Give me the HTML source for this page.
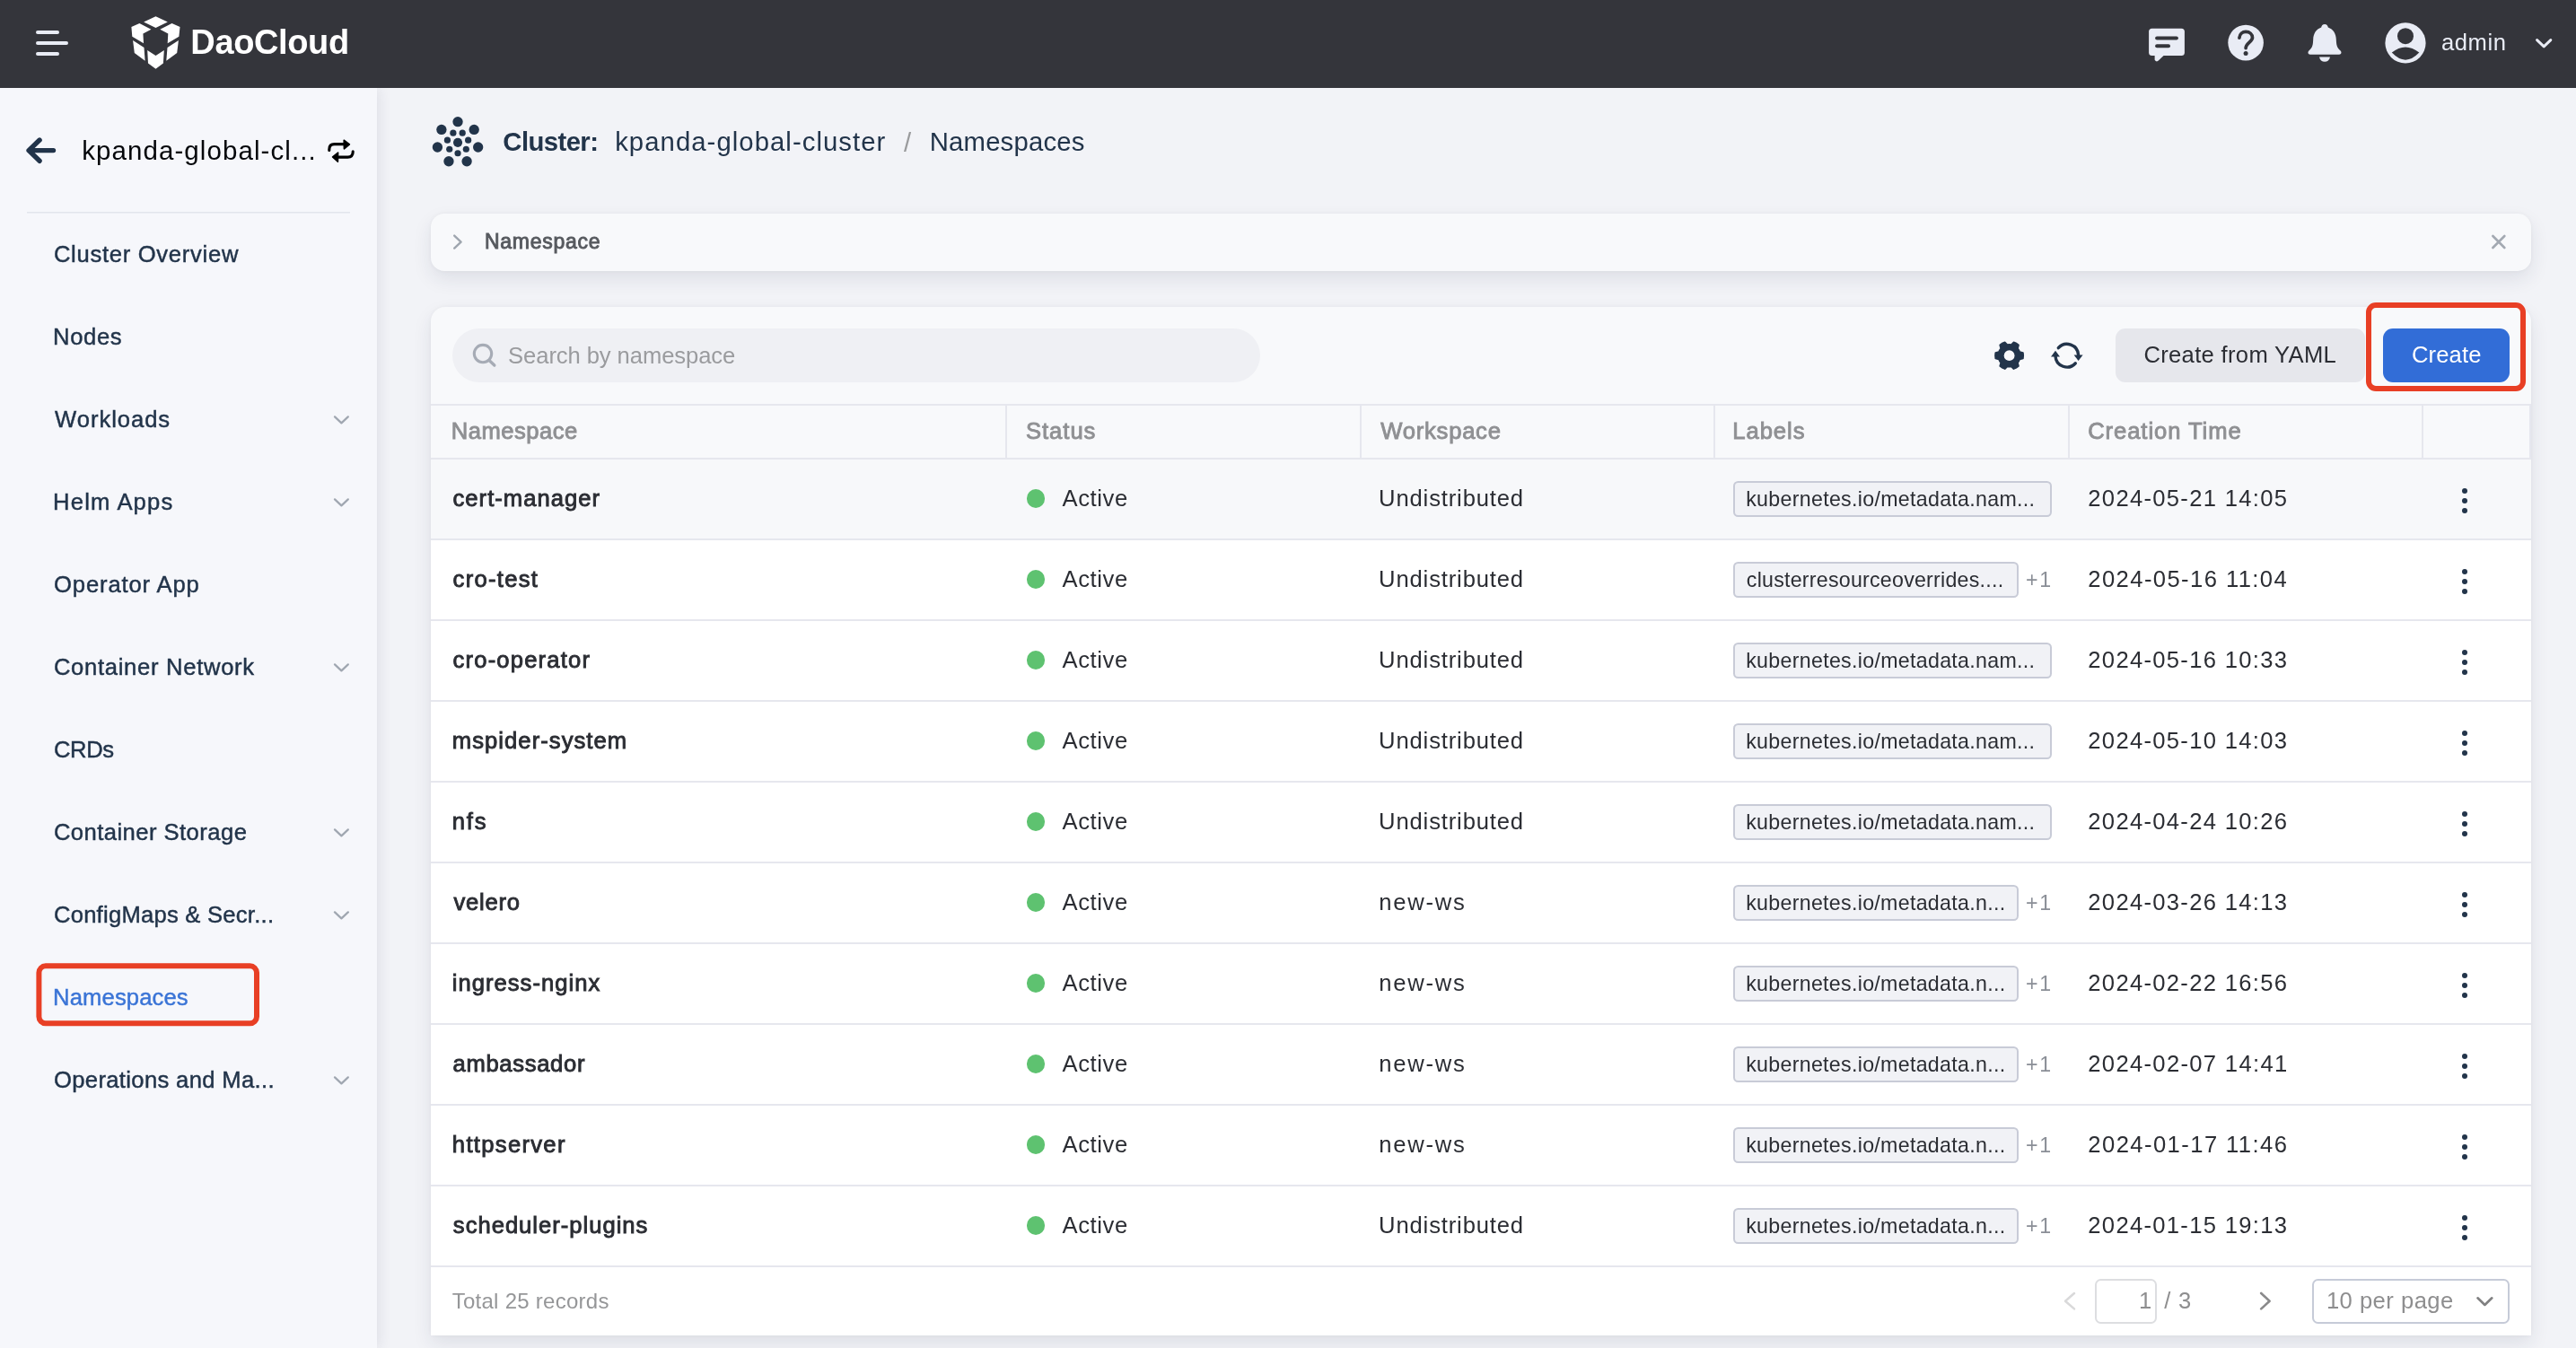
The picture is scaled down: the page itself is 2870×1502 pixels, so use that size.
<!DOCTYPE html>
<html lang="en">
<head>
<meta charset="utf-8">
<title>Namespaces - DaoCloud</title>
<style>
*{box-sizing:border-box;margin:0;padding:0}
html,body{width:2870px;height:1502px;overflow:hidden;background:#f2f3f7;font-family:"Liberation Sans",sans-serif}
.abs,.t,.tag,.dot,.kd{position:absolute}
.t{white-space:nowrap;line-height:1}
#hdr{position:absolute;left:0;top:0;width:2870px;height:97.5px;background:#34353b}
#side{position:absolute;left:0;top:97.5px;width:420px;height:1405px;background:#f6f7fb;box-shadow:3px 0 14px rgba(30,40,70,.085)}
.card{position:absolute;background:#f8f9fb;box-shadow:0 9px 21px rgba(30,40,70,.095),0 0 6px rgba(30,40,70,.05)}
.tag{height:39.7px;border:2px solid #c8cbd7;background:#f1f2f6;border-radius:5.5px}
.dot{width:20.5px;height:20.5px;border-radius:50%;background:#5ec270}
.kd{width:6px;height:6px;border-radius:50%;background:#22344a}
.hl{position:absolute;height:2px;background:#e6e7ee}
.vl{position:absolute;width:2px;background:#e6e7ee}
svg{position:absolute;overflow:visible}
#root{position:absolute;left:0;top:0;width:2870px;height:1502px;will-change:transform}
</style>
</head>
<body>
<div id="root">
<div id="side"></div>
<div id="hdr"></div>

<!-- header icons -->
<svg style="left:0;top:0" width="2870" height="98" viewBox="0 0 2870 98">
  <g stroke="#e9ecf5" stroke-width="4" stroke-linecap="round">
    <line x1="42" y1="36" x2="64" y2="36"/><line x1="42" y1="48" x2="74" y2="48"/><line x1="42" y1="60" x2="64" y2="60"/>
  </g>
  <g fill="#ffffff">
    <polygon points="173.5,18.2 186.8,24.5 173.5,31.1 160.1,24.5"/>
    <polygon points="146.4,30.0 155.4,26.1 168.4,32.8 159.4,37.6 160.0,48.3 147.3,40.7"/>
    <polygon points="200.5,30.0 191.5,26.1 178.3,32.8 187.3,37.6 186.7,48.3 199.4,40.7"/>
    <polygon points="148.1,44.9 160.5,53.1 161.6,67.8 149.8,59.0"/>
    <polygon points="198.9,44.9 186.5,53.1 185.3,67.8 197.2,59.0"/>
    <polygon points="164.2,55.9 173.5,61.9 182.8,55.9 181.9,70.6 173.5,76.8 165.0,70.6"/>
  </g>
  <!-- chat -->
  <g fill="#e9ecf5">
    <rect x="2394.1" y="31.8" width="39.8" height="30.3" rx="3.5"/>
    <path d="M2400.6 60 L2400.6 66.8 Q2402.6 69.6 2404.8 67.6 L2411.6 61 Z"/>
  </g>
  <g stroke="#34353b" stroke-width="4" stroke-linecap="round">
    <line x1="2403.1" y1="42.6" x2="2424.9" y2="42.6"/><line x1="2403.1" y1="51.3" x2="2416" y2="51.3"/>
  </g>
  <!-- help -->
  <circle cx="2502.1" cy="47.6" r="19.8" fill="#e9ecf5"/>
  <path d="M2494.9 42.2 C2495.3 37.6 2498.5 35.4 2502.1 35.4 C2506.5 35.4 2509.5 38.2 2509.5 42 C2509.5 46.4 2502.1 48 2502.1 53.6" fill="none" stroke="#34353b" stroke-width="3.7" stroke-linecap="round"/>
  <circle cx="2502.1" cy="59.6" r="2.5" fill="#34353b"/>
  <!-- bell -->
  <g fill="#e9ecf5">
    <path d="M2590 27 C2592.2 27 2593.6 28.6 2593.8 30.6 C2599.6 32.6 2602.6 37.6 2602.8 44 C2603 50 2603.6 53.2 2607.6 56.6 C2609.2 58.2 2608.6 60.8 2606.2 60.8 L2573.8 60.8 C2571.4 60.8 2570.8 58.2 2572.4 56.6 C2576.4 53.2 2577 50 2577.2 44 C2577.4 37.6 2580.4 32.6 2586.2 30.6 C2586.4 28.6 2587.8 27 2590 27 Z"/>
    <path d="M2584 63.5 L2596 63.5 C2595.4 66.8 2593 68.8 2590 68.8 C2587 68.8 2584.6 66.8 2584 63.5 Z"/>
  </g>
  <!-- avatar -->
  <circle cx="2680" cy="47.9" r="22.6" fill="#e9ecf5"/>
  <circle cx="2680" cy="40.2" r="9" fill="#34353b"/>
  <path d="M2664.8 58.6 Q2680 46.2 2695.3 58.6 Q2680 74.8 2664.8 58.6 Z" fill="#34353b"/>
  <polyline points="2826.6,44.6 2834.2,51.8 2841.8,44.6" fill="none" stroke="#e9ecf5" stroke-width="3" stroke-linecap="round" stroke-linejoin="round"/>
</svg>

<!-- sidebar shapes -->
<svg style="left:0;top:0" width="440" height="1502" viewBox="0 0 440 1502">
  <path d="M59.5 167.6 L32.05 167.6 M44.1 156 L32.05 167.6 L44.1 179.3" fill="none" stroke="#22344a" stroke-width="5.4" stroke-linecap="round" stroke-linejoin="round"/>
  <g fill="none" stroke="#000" stroke-width="3.1" stroke-linecap="round">
    <path d="M366.8 167.4 L366.8 166.4 Q366.8 160.6 372.6 160.6 L383 160.6"/>
    <path d="M393.2 168.7 L393.2 169.3 Q393.2 175.1 387.4 175.1 L377 175.1"/>
  </g>
  <g fill="#000" stroke="#000" stroke-width="1.6" stroke-linejoin="round">
    <polygon points="383.2,156.2 389.4,160.8 383.4,165.8"/>
    <polygon points="376.6,170.1 370.6,174.9 376.4,180.1"/>
  </g>
  <rect x="30" y="236" width="360" height="1.5" fill="#e2e5ec"/>
  <g fill="none" stroke="#a0a7b1" stroke-width="2.3" stroke-linecap="round" stroke-linejoin="round">
    <polyline points="373,464.40 380.4,471.30 387.8,464.40"/>
    <polyline points="373,556.40 380.4,563.30 387.8,556.40"/>
    <polyline points="373,740.40 380.4,747.30 387.8,740.40"/>
    <polyline points="373,924.40 380.4,931.30 387.8,924.40"/>
    <polyline points="373,1016.40 380.4,1023.30 387.8,1016.40"/>
    <polyline points="373,1200.40 380.4,1207.30 387.8,1200.40"/>
  </g>
  <rect x="43.4" y="1076.3" width="242.6" height="64" rx="7.5" fill="none" stroke="#e83f25" stroke-width="6"/>
</svg>

<!-- cluster icon -->
<svg style="left:482px;top:130px" width="56" height="56" viewBox="-28 -28 56 56" id="clu"><circle cx="0.04" cy="0.85" r="5.05" fill="#22344a"/><circle cx="0.04" cy="-22.35" r="5.65" fill="#22344a"/><circle cx="5.20" cy="-9.87" r="3.6" fill="#22344a"/><circle cx="18.18" cy="-13.61" r="5.65" fill="#22344a"/><circle cx="11.64" cy="-1.80" r="3.6" fill="#22344a"/><circle cx="22.66" cy="6.01" r="5.65" fill="#22344a"/><circle cx="9.34" cy="8.27" r="3.6" fill="#22344a"/><circle cx="10.11" cy="21.75" r="5.65" fill="#22344a"/><circle cx="0.04" cy="12.75" r="3.6" fill="#22344a"/><circle cx="-10.03" cy="21.75" r="5.65" fill="#22344a"/><circle cx="-9.26" cy="8.27" r="3.6" fill="#22344a"/><circle cx="-22.58" cy="6.01" r="5.65" fill="#22344a"/><circle cx="-11.56" cy="-1.80" r="3.6" fill="#22344a"/><circle cx="-18.10" cy="-13.61" r="5.65" fill="#22344a"/><circle cx="-5.12" cy="-9.87" r="3.6" fill="#22344a"/></svg>

<!-- cards -->
<div class="card" style="left:480px;top:238px;width:2340px;height:64px;border-radius:15px"></div>
<div class="card" style="left:480px;top:342px;width:2340px;height:1146px;border-radius:16px 16px 0 0;overflow:hidden">
  <div class="abs" style="left:0;top:169px;width:2340px;height:90px;background:#f7f8fa"></div>
  <div class="abs" style="left:0;top:259px;width:2340px;height:887px;background:#fff"></div>
</div>
<svg style="left:0;top:0" width="2870" height="1502" viewBox="0 0 2870 1502">
  <polyline points="506.2,262.6 513.6,269.6 506.2,276.6" fill="none" stroke="#9fa6af" stroke-width="2.4" stroke-linecap="round" stroke-linejoin="round"/>
  <path d="M2777.4 263 L2790.3 276 M2790.3 263 L2777.4 276" stroke="#a3a9b2" stroke-width="2.6" stroke-linecap="round"/>
</svg>

<!-- toolbar -->
<div class="abs" style="left:504px;top:366px;width:900px;height:59.5px;border-radius:30px;background:#eff0f4"></div>
<svg style="left:0;top:0" width="2870" height="1502" viewBox="0 0 2870 1502">
  <circle cx="538" cy="394.1" r="9.7" fill="none" stroke="#a6abb5" stroke-width="3.1"/>
  <line x1="545" y1="401.6" x2="550.8" y2="407" stroke="#a6abb5" stroke-width="3.4" stroke-linecap="round"/>
  <g><path d="M2250.19 392.09 L2253.89 393.09 A15.60 15.60 0 0 1 2253.89 399.31 L2250.19 400.31 A12.30 12.30 0 0 1 2247.95 404.19 L2248.94 407.88 A15.60 15.60 0 0 1 2243.55 410.99 L2240.84 408.29 A12.30 12.30 0 0 1 2236.36 408.29 L2233.65 410.99 A15.60 15.60 0 0 1 2228.26 407.88 L2229.25 404.19 A12.30 12.30 0 0 1 2227.01 400.31 L2223.31 399.31 A15.60 15.60 0 0 1 2223.31 393.09 L2227.01 392.09 A12.30 12.30 0 0 1 2229.25 388.21 L2228.26 384.52 A15.60 15.60 0 0 1 2233.65 381.41 L2236.36 384.11 A12.30 12.30 0 0 1 2240.84 384.11 L2243.55 381.41 A15.60 15.60 0 0 1 2248.94 384.52 L2247.95 388.21 A12.30 12.30 0 0 1 2250.19 392.09Z" fill="#22344a" stroke="#22344a" stroke-width="1.8" stroke-linejoin="round"/><circle cx="2238.6" cy="396.2" r="5.9" fill="#f8f9fb"/></g>
  <g><path d="M2293.29 387.64 A12.8 12.8 0 0 1 2315.58 395.53" fill="none" stroke="#22344a" stroke-width="3.4" stroke-linecap="round"/><path d="M2312.31 404.76 A12.8 12.8 0 0 1 2290.02 396.87" fill="none" stroke="#22344a" stroke-width="3.4" stroke-linecap="round"/><polygon points="2310.60,395.40 2320.60,395.40 2315.60,401.90" fill="#22344a"/><polygon points="2285.00,397.60 2295.00,397.60 2290.00,390.80" fill="#22344a"/></g>
</svg>
<div class="abs" style="left:2357px;top:366px;width:278px;height:59.6px;border-radius:11px;background:#e6e7ec"></div>
<div class="abs" style="left:2655px;top:366px;width:141px;height:59.6px;border-radius:11px;background:#326dd7"></div>
<div class="abs" style="left:2636px;top:337px;width:178px;height:99px;border-radius:11px;border:6px solid #e83f25"></div>

<!-- table lines -->
<div class="hl" style="left:480px;top:450px;width:2340px"></div>
<div class="hl" style="left:480px;top:510px;width:2340px"></div>
<div class="hl" style="left:480px;top:600px;width:2340px"></div>
<div class="hl" style="left:480px;top:690px;width:2340px"></div>
<div class="hl" style="left:480px;top:780px;width:2340px"></div>
<div class="hl" style="left:480px;top:870px;width:2340px"></div>
<div class="hl" style="left:480px;top:960px;width:2340px"></div>
<div class="hl" style="left:480px;top:1050px;width:2340px"></div>
<div class="hl" style="left:480px;top:1140px;width:2340px"></div>
<div class="hl" style="left:480px;top:1230px;width:2340px"></div>
<div class="hl" style="left:480px;top:1320px;width:2340px"></div>
<div class="hl" style="left:480px;top:1410px;width:2340px"></div>
<div class="vl" style="left:1120px;top:452px;height:58px"></div>
<div class="vl" style="left:1514.5px;top:452px;height:58px"></div>
<div class="vl" style="left:1909px;top:452px;height:58px"></div>
<div class="vl" style="left:2303.5px;top:452px;height:58px"></div>
<div class="vl" style="left:2698px;top:452px;height:58px"></div>
<div class="vl" style="left:2818px;top:452px;height:58px"></div>

<div class="tag" style="left:1931.2px;top:535.9px;width:354.4999999999998px"></div>
<div class="dot" style="left:1143.75px;top:545px"></div>
<div class="kd" style="left:2743px;top:543.9px"></div>
<div class="kd" style="left:2743px;top:555px"></div>
<div class="kd" style="left:2743px;top:566.1px"></div>
<div class="tag" style="left:1931.2px;top:625.9px;width:317.4999999999998px"></div>
<div class="dot" style="left:1143.75px;top:635px"></div>
<div class="kd" style="left:2743px;top:633.9px"></div>
<div class="kd" style="left:2743px;top:645px"></div>
<div class="kd" style="left:2743px;top:656.1px"></div>
<div class="tag" style="left:1931.2px;top:715.9px;width:354.4999999999998px"></div>
<div class="dot" style="left:1143.75px;top:725px"></div>
<div class="kd" style="left:2743px;top:723.9px"></div>
<div class="kd" style="left:2743px;top:735px"></div>
<div class="kd" style="left:2743px;top:746.1px"></div>
<div class="tag" style="left:1931.2px;top:805.9px;width:354.4999999999998px"></div>
<div class="dot" style="left:1143.75px;top:815px"></div>
<div class="kd" style="left:2743px;top:813.9px"></div>
<div class="kd" style="left:2743px;top:825px"></div>
<div class="kd" style="left:2743px;top:836.1px"></div>
<div class="tag" style="left:1931.2px;top:895.9px;width:354.4999999999998px"></div>
<div class="dot" style="left:1143.75px;top:905px"></div>
<div class="kd" style="left:2743px;top:903.9px"></div>
<div class="kd" style="left:2743px;top:915px"></div>
<div class="kd" style="left:2743px;top:926.1px"></div>
<div class="tag" style="left:1931.2px;top:985.9px;width:317.4999999999998px"></div>
<div class="dot" style="left:1143.75px;top:995px"></div>
<div class="kd" style="left:2743px;top:993.9px"></div>
<div class="kd" style="left:2743px;top:1005px"></div>
<div class="kd" style="left:2743px;top:1016.1px"></div>
<div class="tag" style="left:1931.2px;top:1075.9px;width:317.4999999999998px"></div>
<div class="dot" style="left:1143.75px;top:1085px"></div>
<div class="kd" style="left:2743px;top:1083.9px"></div>
<div class="kd" style="left:2743px;top:1095px"></div>
<div class="kd" style="left:2743px;top:1106.1px"></div>
<div class="tag" style="left:1931.2px;top:1165.9px;width:317.4999999999998px"></div>
<div class="dot" style="left:1143.75px;top:1175px"></div>
<div class="kd" style="left:2743px;top:1173.9px"></div>
<div class="kd" style="left:2743px;top:1185px"></div>
<div class="kd" style="left:2743px;top:1196.1px"></div>
<div class="tag" style="left:1931.2px;top:1255.9px;width:317.4999999999998px"></div>
<div class="dot" style="left:1143.75px;top:1265px"></div>
<div class="kd" style="left:2743px;top:1263.9px"></div>
<div class="kd" style="left:2743px;top:1275px"></div>
<div class="kd" style="left:2743px;top:1286.1px"></div>
<div class="tag" style="left:1931.2px;top:1345.9px;width:317.4999999999998px"></div>
<div class="dot" style="left:1143.75px;top:1355px"></div>
<div class="kd" style="left:2743px;top:1353.9px"></div>
<div class="kd" style="left:2743px;top:1365px"></div>
<div class="kd" style="left:2743px;top:1376.1px"></div>

<!-- pagination -->
<div class="abs" style="left:2334.4px;top:1424.5px;width:69px;height:50.6px;border:2px solid #dddee1;border-radius:6.5px;background:#fff"></div>
<div class="abs" style="left:2576.3px;top:1424.5px;width:219.3px;height:50.6px;border:2px solid #c6cbd8;border-radius:6.5px;background:#fff"></div>
<svg style="left:0;top:0" width="2870" height="1502" viewBox="0 0 2870 1502">
  <polyline points="2311,1441 2301,1449.7 2311,1458.4" fill="none" stroke="#d9d9da" stroke-width="2.5" stroke-linecap="round" stroke-linejoin="round"/>
  <polyline points="2519.2,1441 2528.6,1449.7 2519.2,1458.4" fill="none" stroke="#8a8a8b" stroke-width="2.6" stroke-linecap="round" stroke-linejoin="round"/>
  <polyline points="2760.5,1446.3 2768.4,1454 2776.3,1446.3" fill="none" stroke="#808081" stroke-width="2.6" stroke-linecap="round" stroke-linejoin="round"/>
</svg>

<span class="t" style="left:212.32px;top:28px;font-size:38px;font-weight:700;color:#ffffff;letter-spacing:-0.374px;">DaoCloud</span>
<span class="t" style="left:2720.00px;top:35px;font-size:25.6px;font-weight:400;color:#e9ecf5;letter-spacing:0.553px;">admin</span>
<span class="t" style="left:91.16px;top:153px;font-size:29.5px;font-weight:400;color:#05070b;letter-spacing:1.081px;">kpanda-global-cl...</span>
<span class="t" style="left:59.93px;top:271px;font-size:25.6px;font-weight:400;color:#22344a;letter-spacing:0.707px;-webkit-text-stroke:0.45px #22344a;">Cluster Overview</span>
<span class="t" style="left:59.12px;top:363px;font-size:25.6px;font-weight:400;color:#22344a;letter-spacing:0.637px;-webkit-text-stroke:0.45px #22344a;">Nodes</span>
<span class="t" style="left:61.12px;top:455px;font-size:25.6px;font-weight:400;color:#22344a;letter-spacing:0.948px;-webkit-text-stroke:0.45px #22344a;">Workloads</span>
<span class="t" style="left:59.12px;top:547px;font-size:25.6px;font-weight:400;color:#22344a;letter-spacing:1.169px;-webkit-text-stroke:0.45px #22344a;">Helm Apps</span>
<span class="t" style="left:60.02px;top:639px;font-size:25.6px;font-weight:400;color:#22344a;letter-spacing:0.873px;-webkit-text-stroke:0.45px #22344a;">Operator App</span>
<span class="t" style="left:59.93px;top:731px;font-size:25.6px;font-weight:400;color:#22344a;letter-spacing:0.703px;-webkit-text-stroke:0.45px #22344a;">Container Network</span>
<span class="t" style="left:59.93px;top:823px;font-size:25.6px;font-weight:400;color:#22344a;letter-spacing:-0.338px;-webkit-text-stroke:0.45px #22344a;">CRDs</span>
<span class="t" style="left:59.93px;top:915px;font-size:25.6px;font-weight:400;color:#22344a;letter-spacing:0.451px;-webkit-text-stroke:0.45px #22344a;">Container Storage</span>
<span class="t" style="left:59.93px;top:1007px;font-size:25.6px;font-weight:400;color:#22344a;letter-spacing:0.247px;-webkit-text-stroke:0.45px #22344a;">ConfigMaps &amp; Secr...</span>
<span class="t" style="left:59.12px;top:1099px;font-size:25.6px;font-weight:400;color:#3a74d6;letter-spacing:0.128px;-webkit-text-stroke:0.45px #3a74d6;">Namespaces</span>
<span class="t" style="left:60.02px;top:1191px;font-size:25.6px;font-weight:400;color:#22344a;letter-spacing:0.342px;-webkit-text-stroke:0.45px #22344a;">Operations and Ma...</span>
<span class="t" style="left:560.33px;top:143px;font-size:29.3px;font-weight:700;color:#22344a;letter-spacing:-0.587px;">Cluster:</span>
<span class="t" style="left:685.17px;top:143px;font-size:29.3px;font-weight:400;color:#22344a;letter-spacing:1.054px;">kpanda-global-cluster</span>
<span class="t" style="left:1007.00px;top:144px;font-size:29.3px;font-weight:400;color:#9a9b9d;letter-spacing:0.000px;">/</span>
<span class="t" style="left:1035.71px;top:143px;font-size:29.3px;font-weight:400;color:#22344a;letter-spacing:0.190px;">Namespaces</span>
<span class="t" style="left:539.90px;top:258px;font-size:23px;font-weight:400;color:#56595e;letter-spacing:0.739px;-webkit-text-stroke:0.9px #56595e;">Namespace</span>
<span class="t" style="left:566.10px;top:384px;font-size:25.6px;font-weight:400;color:#9a9b9e;letter-spacing:-0.083px;">Search by namespace</span>
<span class="t" style="left:2388.40px;top:383px;font-size:25.6px;font-weight:400;color:#2b2d33;letter-spacing:0.324px;">Create from YAML</span>
<span class="t" style="left:2686.90px;top:383px;font-size:25.6px;font-weight:400;color:#ffffff;letter-spacing:0.140px;">Create</span>
<span class="t" style="left:502.85px;top:468px;font-size:25.6px;font-weight:400;color:#8f9093;letter-spacing:0.467px;-webkit-text-stroke:0.9px #8f9093;">Namespace</span>
<span class="t" style="left:1142.95px;top:468px;font-size:25.6px;font-weight:400;color:#8f9093;letter-spacing:0.985px;-webkit-text-stroke:0.9px #8f9093;">Status</span>
<span class="t" style="left:1538.35px;top:468px;font-size:25.6px;font-weight:400;color:#8f9093;letter-spacing:0.752px;-webkit-text-stroke:0.9px #8f9093;">Workspace</span>
<span class="t" style="left:1930.35px;top:468px;font-size:25.6px;font-weight:400;color:#8f9093;letter-spacing:0.932px;-webkit-text-stroke:0.9px #8f9093;">Labels</span>
<span class="t" style="left:2326.15px;top:468px;font-size:25.6px;font-weight:400;color:#8f9093;letter-spacing:0.935px;-webkit-text-stroke:0.9px #8f9093;">Creation Time</span>
<span class="t" style="left:504.55px;top:543px;font-size:25.6px;font-weight:400;color:#2b2d33;letter-spacing:1.017px;-webkit-text-stroke:0.9px #2b2d33;">cert-manager</span>
<span class="t" style="left:1183.50px;top:543px;font-size:25.6px;font-weight:400;color:#2b2d33;letter-spacing:0.585px;">Active</span>
<span class="t" style="left:1536.10px;top:543px;font-size:25.6px;font-weight:400;color:#2b2d33;letter-spacing:0.850px;">Undistributed</span>
<span class="t" style="left:1945.20px;top:545px;font-size:23.2px;font-weight:400;color:#2b2d33;letter-spacing:0.309px;">kubernetes.io/metadata.nam...</span>
<span class="t" style="left:2326.30px;top:543px;font-size:25.6px;font-weight:400;color:#2b2d33;letter-spacing:1.307px;">2024-05-21 14:05</span>
<span class="t" style="left:504.55px;top:633px;font-size:25.6px;font-weight:400;color:#2b2d33;letter-spacing:1.288px;-webkit-text-stroke:0.9px #2b2d33;">cro-test</span>
<span class="t" style="left:1183.50px;top:633px;font-size:25.6px;font-weight:400;color:#2b2d33;letter-spacing:0.585px;">Active</span>
<span class="t" style="left:1536.10px;top:633px;font-size:25.6px;font-weight:400;color:#2b2d33;letter-spacing:0.850px;">Undistributed</span>
<span class="t" style="left:1945.80px;top:635px;font-size:23.2px;font-weight:400;color:#2b2d33;letter-spacing:0.246px;">clusterresourceoverrides....</span>
<span class="t" style="left:2256.90px;top:635px;font-size:23.2px;font-weight:400;color:#8a8e96;letter-spacing:1.752px;">+1</span>
<span class="t" style="left:2326.30px;top:633px;font-size:25.6px;font-weight:400;color:#2b2d33;letter-spacing:1.414px;">2024-05-16 11:04</span>
<span class="t" style="left:504.55px;top:723px;font-size:25.6px;font-weight:400;color:#2b2d33;letter-spacing:1.181px;-webkit-text-stroke:0.9px #2b2d33;">cro-operator</span>
<span class="t" style="left:1183.50px;top:723px;font-size:25.6px;font-weight:400;color:#2b2d33;letter-spacing:0.585px;">Active</span>
<span class="t" style="left:1536.10px;top:723px;font-size:25.6px;font-weight:400;color:#2b2d33;letter-spacing:0.850px;">Undistributed</span>
<span class="t" style="left:1945.20px;top:725px;font-size:23.2px;font-weight:400;color:#2b2d33;letter-spacing:0.309px;">kubernetes.io/metadata.nam...</span>
<span class="t" style="left:2326.30px;top:723px;font-size:25.6px;font-weight:400;color:#2b2d33;letter-spacing:1.307px;">2024-05-16 10:33</span>
<span class="t" style="left:503.85px;top:813px;font-size:25.6px;font-weight:400;color:#2b2d33;letter-spacing:1.052px;-webkit-text-stroke:0.9px #2b2d33;">mspider-system</span>
<span class="t" style="left:1183.50px;top:813px;font-size:25.6px;font-weight:400;color:#2b2d33;letter-spacing:0.585px;">Active</span>
<span class="t" style="left:1536.10px;top:813px;font-size:25.6px;font-weight:400;color:#2b2d33;letter-spacing:0.850px;">Undistributed</span>
<span class="t" style="left:1945.20px;top:815px;font-size:23.2px;font-weight:400;color:#2b2d33;letter-spacing:0.309px;">kubernetes.io/metadata.nam...</span>
<span class="t" style="left:2326.30px;top:813px;font-size:25.6px;font-weight:400;color:#2b2d33;letter-spacing:1.307px;">2024-05-10 14:03</span>
<span class="t" style="left:503.85px;top:903px;font-size:25.6px;font-weight:400;color:#2b2d33;letter-spacing:1.725px;-webkit-text-stroke:0.9px #2b2d33;">nfs</span>
<span class="t" style="left:1183.50px;top:903px;font-size:25.6px;font-weight:400;color:#2b2d33;letter-spacing:0.585px;">Active</span>
<span class="t" style="left:1536.10px;top:903px;font-size:25.6px;font-weight:400;color:#2b2d33;letter-spacing:0.850px;">Undistributed</span>
<span class="t" style="left:1945.20px;top:905px;font-size:23.2px;font-weight:400;color:#2b2d33;letter-spacing:0.309px;">kubernetes.io/metadata.nam...</span>
<span class="t" style="left:2326.30px;top:903px;font-size:25.6px;font-weight:400;color:#2b2d33;letter-spacing:1.307px;">2024-04-24 10:26</span>
<span class="t" style="left:505.55px;top:993px;font-size:25.6px;font-weight:400;color:#2b2d33;letter-spacing:0.762px;-webkit-text-stroke:0.9px #2b2d33;">velero</span>
<span class="t" style="left:1183.50px;top:993px;font-size:25.6px;font-weight:400;color:#2b2d33;letter-spacing:0.585px;">Active</span>
<span class="t" style="left:1536.30px;top:993px;font-size:25.6px;font-weight:400;color:#2b2d33;letter-spacing:1.765px;">new-ws</span>
<span class="t" style="left:1945.20px;top:995px;font-size:23.2px;font-weight:400;color:#2b2d33;letter-spacing:0.304px;">kubernetes.io/metadata.n...</span>
<span class="t" style="left:2256.90px;top:995px;font-size:23.2px;font-weight:400;color:#8a8e96;letter-spacing:1.752px;">+1</span>
<span class="t" style="left:2326.30px;top:993px;font-size:25.6px;font-weight:400;color:#2b2d33;letter-spacing:1.307px;">2024-03-26 14:13</span>
<span class="t" style="left:503.85px;top:1083px;font-size:25.6px;font-weight:400;color:#2b2d33;letter-spacing:1.012px;-webkit-text-stroke:0.9px #2b2d33;">ingress-nginx</span>
<span class="t" style="left:1183.50px;top:1083px;font-size:25.6px;font-weight:400;color:#2b2d33;letter-spacing:0.585px;">Active</span>
<span class="t" style="left:1536.30px;top:1083px;font-size:25.6px;font-weight:400;color:#2b2d33;letter-spacing:1.765px;">new-ws</span>
<span class="t" style="left:1945.20px;top:1085px;font-size:23.2px;font-weight:400;color:#2b2d33;letter-spacing:0.304px;">kubernetes.io/metadata.n...</span>
<span class="t" style="left:2256.90px;top:1085px;font-size:23.2px;font-weight:400;color:#8a8e96;letter-spacing:1.752px;">+1</span>
<span class="t" style="left:2326.30px;top:1083px;font-size:25.6px;font-weight:400;color:#2b2d33;letter-spacing:1.307px;">2024-02-22 16:56</span>
<span class="t" style="left:504.55px;top:1173px;font-size:25.6px;font-weight:400;color:#2b2d33;letter-spacing:0.672px;-webkit-text-stroke:0.9px #2b2d33;">ambassador</span>
<span class="t" style="left:1183.50px;top:1173px;font-size:25.6px;font-weight:400;color:#2b2d33;letter-spacing:0.585px;">Active</span>
<span class="t" style="left:1536.30px;top:1173px;font-size:25.6px;font-weight:400;color:#2b2d33;letter-spacing:1.765px;">new-ws</span>
<span class="t" style="left:1945.20px;top:1175px;font-size:23.2px;font-weight:400;color:#2b2d33;letter-spacing:0.304px;">kubernetes.io/metadata.n...</span>
<span class="t" style="left:2256.90px;top:1175px;font-size:23.2px;font-weight:400;color:#8a8e96;letter-spacing:1.752px;">+1</span>
<span class="t" style="left:2326.30px;top:1173px;font-size:25.6px;font-weight:400;color:#2b2d33;letter-spacing:1.321px;">2024-02-07 14:41</span>
<span class="t" style="left:503.85px;top:1263px;font-size:25.6px;font-weight:400;color:#2b2d33;letter-spacing:1.311px;-webkit-text-stroke:0.9px #2b2d33;">httpserver</span>
<span class="t" style="left:1183.50px;top:1263px;font-size:25.6px;font-weight:400;color:#2b2d33;letter-spacing:0.585px;">Active</span>
<span class="t" style="left:1536.30px;top:1263px;font-size:25.6px;font-weight:400;color:#2b2d33;letter-spacing:1.765px;">new-ws</span>
<span class="t" style="left:1945.20px;top:1265px;font-size:23.2px;font-weight:400;color:#2b2d33;letter-spacing:0.304px;">kubernetes.io/metadata.n...</span>
<span class="t" style="left:2256.90px;top:1265px;font-size:23.2px;font-weight:400;color:#8a8e96;letter-spacing:1.752px;">+1</span>
<span class="t" style="left:2326.30px;top:1263px;font-size:25.6px;font-weight:400;color:#2b2d33;letter-spacing:1.434px;">2024-01-17 11:46</span>
<span class="t" style="left:504.85px;top:1353px;font-size:25.6px;font-weight:400;color:#2b2d33;letter-spacing:0.997px;-webkit-text-stroke:0.9px #2b2d33;">scheduler-plugins</span>
<span class="t" style="left:1183.50px;top:1353px;font-size:25.6px;font-weight:400;color:#2b2d33;letter-spacing:0.585px;">Active</span>
<span class="t" style="left:1536.10px;top:1353px;font-size:25.6px;font-weight:400;color:#2b2d33;letter-spacing:0.850px;">Undistributed</span>
<span class="t" style="left:1945.20px;top:1355px;font-size:23.2px;font-weight:400;color:#2b2d33;letter-spacing:0.304px;">kubernetes.io/metadata.n...</span>
<span class="t" style="left:2256.90px;top:1355px;font-size:23.2px;font-weight:400;color:#8a8e96;letter-spacing:1.752px;">+1</span>
<span class="t" style="left:2326.30px;top:1353px;font-size:25.6px;font-weight:400;color:#2b2d33;letter-spacing:1.307px;">2024-01-15 19:13</span>
<span class="t" style="left:503.70px;top:1438px;font-size:24px;font-weight:400;color:#959698;letter-spacing:0.263px;">Total 25 records</span>
<span class="t" style="left:2383.10px;top:1437px;font-size:25.6px;font-weight:400;color:#8e8e8f;letter-spacing:0.000px;">1</span>
<span class="t" style="left:2411.30px;top:1437px;font-size:25.6px;font-weight:400;color:#8e8e8f;letter-spacing:0.688px;">/ 3</span>
<span class="t" style="left:2591.90px;top:1437px;font-size:25.6px;font-weight:400;color:#8e8e8f;letter-spacing:0.479px;">10 per page</span>
</div>
</body>
</html>
